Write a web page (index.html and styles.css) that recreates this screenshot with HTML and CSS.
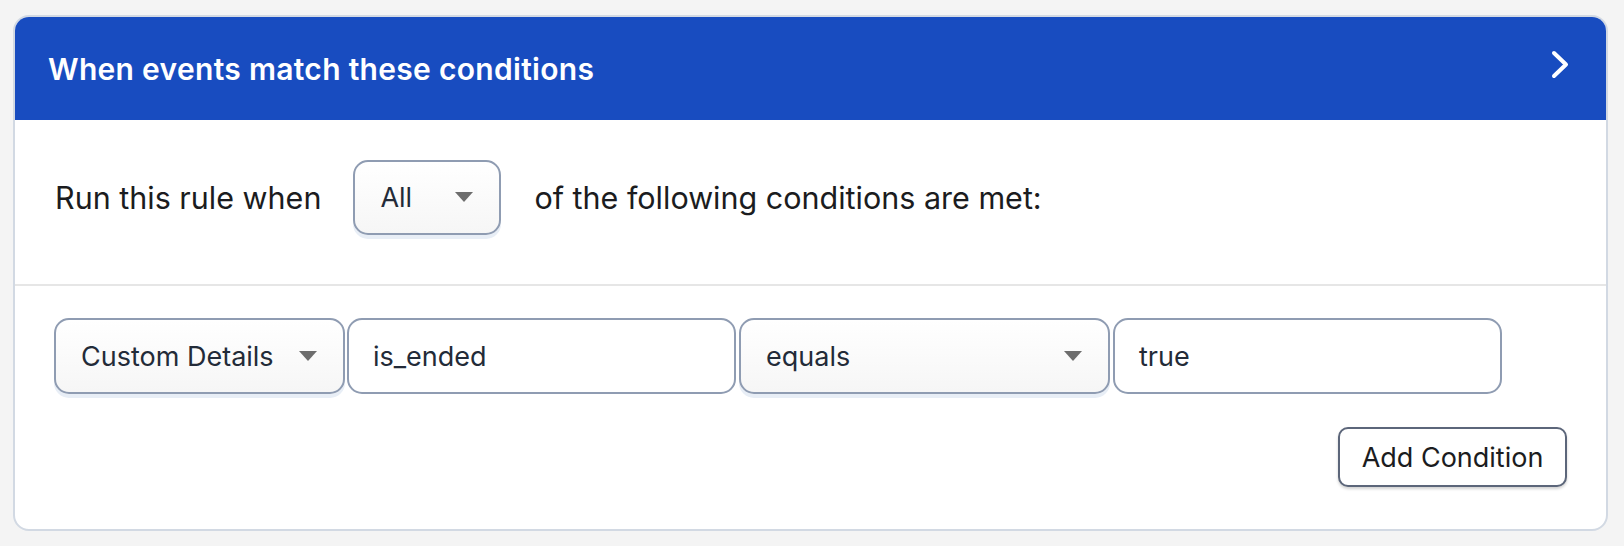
FILE: index.html
```html
<!DOCTYPE html>
<html>
<head>
<meta charset="utf-8">
<link rel="stylesheet" href="styles.css">
</head>
<body>
<div class="card">
  <div class="card-header">
    <span class="card-title">When events match these conditions</span>
    <svg class="chevron" width="18" height="29" viewBox="0 0 18 29"><polyline points="3,3 15,14.5 3,26" fill="none" stroke="#fff" stroke-width="4" stroke-linecap="round" stroke-linejoin="round"/></svg>
  </div>
  <div class="rule-row">
    <span class="label">Run this rule when</span>
    <div class="select select-all"><span>All</span><span class="caret"></span></div>
    <span class="label">of the following conditions are met:</span>
  </div>
  <div class="conditions">
    <div class="cond-row">
      <div class="select w-field"><span>Custom Details</span><span class="caret"></span></div>
      <div class="input w-key">is_ended</div>
      <div class="select w-op"><span>equals</span><span class="caret"></span></div>
      <div class="input w-val">true</div>
    </div>
    <div class="actions">
      <button class="btn">Add Condition</button>
    </div>
  </div>
</div>
</body>
</html>
```
FILE: styles.css
```css
html, body {
  margin: 0;
  padding: 0;
}
body {
  background: #f4f4f4;
  padding: 15px 16px 16px 13px;
  font-family: Inter, "Noto Sans", sans-serif;
  color: #1b1c20;
}
.card {
  background: #fff;
  border: 2px solid #d2d9e3;
  border-radius: 16px;
  overflow: hidden;
}
.card-header {
  height: 103px;
  background: #184cc0;
  display: flex;
  align-items: center;
  justify-content: space-between;
  padding: 0 37px 0 33px;
}
.card-title {
  color: #fff;
  font-size: 30px;
  font-weight: 600;
  letter-spacing: 0.3px;
}
.chevron {
  margin-bottom: 8px;
}
.rule-row {
  box-sizing: border-box;
  height: 166px;
  display: flex;
  align-items: center;
  padding: 0 40px 10px 40px;
  border-bottom: 2px solid #e6e6e6;
}
.label {
  font-size: 30.5px;
}
.select, .input {
  box-sizing: border-box;
  height: 76px;
  border: 2px solid #8f9cb2;
  border-radius: 15px;
  display: flex;
  align-items: center;
  font-size: 27px;
  color: #232b38;
}
.select {
  background: linear-gradient(#ffffff, #f6f6f6);
  box-shadow: 0 4px 0 #e8eef6;
  justify-content: space-between;
  padding: 0 26px 0 25px;
}
.input {
  background: #fff;
  padding: 0 24px;
}
.caret {
  width: 0;
  height: 0;
  border-left: 9px solid transparent;
  border-right: 9px solid transparent;
  border-top: 10px solid #6d6d6d;
}
.select-all {
  width: 148px;
  height: 75px;
  margin: 0 33px 0 32px;
}
.conditions {
  padding: 32px 39px 42px 39px;
}
.cond-row {
  display: flex;
  gap: 2px;
}
.w-field { width: 291px; }
.w-key { width: 389px; }
.w-op { width: 371px; margin-left: 1px; }
.w-val { width: 389px; margin-left: 1px; }
.actions {
  display: flex;
  justify-content: flex-end;
  margin-top: 33px;
}
.btn {
  box-sizing: border-box;
  width: 229px;
  height: 60px;
  background: #fff;
  border: 2px solid #5c667a;
  border-radius: 10px;
  box-shadow: 0 2px 3px rgba(0,0,0,0.18);
  font-family: Inter, "Noto Sans", sans-serif;
  font-size: 27px;
  color: #1b1c20;
  padding: 0;
}
```
